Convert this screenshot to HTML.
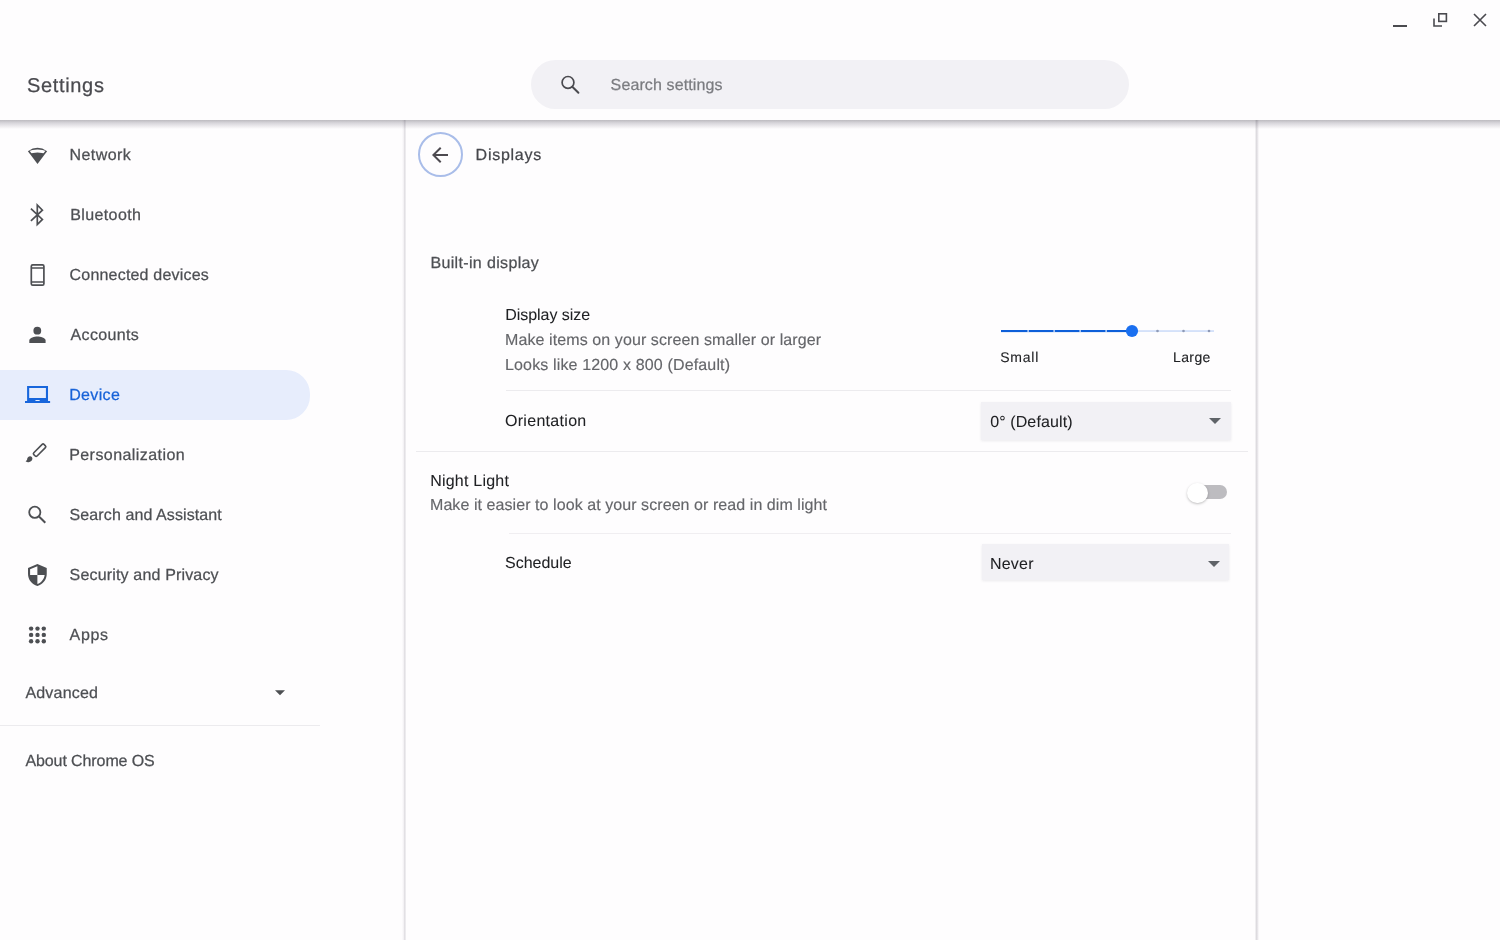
<!DOCTYPE html>
<html><head><meta charset="utf-8">
<style>
*{margin:0;padding:0;box-sizing:border-box}
html,body{width:1500px;height:940px;overflow:hidden;background:#fefdfe;font-family:"Liberation Sans",sans-serif;color:#5f6368}
#root{position:absolute;left:0;top:0;width:1500px;height:940px;will-change:transform;background:#fefdfe;text-rendering:geometricPrecision}
.abs{position:absolute;white-space:nowrap}
.t16{font-size:16px;line-height:16px;-webkit-text-stroke:0.25px currentColor}
#shadow{position:absolute;left:0;top:120px;width:1500px;height:9px;background:linear-gradient(#bebdc1,#dad9dd 35%,#ffffff);mix-blend-mode:multiply;z-index:5}
#search{position:absolute;left:531px;top:60px;width:598px;height:49px;border-radius:25px;background:#f2f1f5}
#panel{position:absolute;left:402px;top:120px;width:856px;height:820px}
#panel:before{content:"";position:absolute;left:0;top:0;width:4px;height:820px;background:linear-gradient(90deg,#fefdfe,#f3f1f4 40%,#e2e0e4 60%,#e2e0e4 80%,#fefdfe)}
#panel:after{content:"";position:absolute;left:853px;top:0;width:4px;height:820px;background:linear-gradient(90deg,#fefdfe,#dad8dc 30%,#e6e4e8 60%,#fefdfe)}
.nav{color:#4d4f53}
.pill{position:absolute;left:0;top:370px;width:310px;height:50px;background:#e7edfc;border-radius:0 24px 24px 0}
.div{position:absolute;height:1px;background:#ecebee}
.dd{position:absolute;background:#f2f1f5;width:250px;height:38px;box-shadow:0 1px 2.5px rgba(60,60,80,0.09)}
.tri{position:absolute;width:0;height:0;border-left:6px solid transparent;border-right:6px solid transparent;border-top:6px solid #5f6368}
.dark{color:#202124;-webkit-text-stroke-width:0.05px}
.sec{color:#65666a;-webkit-text-stroke-width:0.15px}
svg.abs{overflow:visible}
</style></head><body><div id="root">
<!-- window controls -->
<svg class="abs" style="left:0;top:0" width="1500" height="140">
  <rect x="1393" y="25" width="14" height="2" fill="#4a4a4f"/>
  <path d="M1434 18.5 V26 H1442" stroke="#4a4a4f" stroke-width="1.6" fill="none"/>
  <rect x="1438.8" y="13.8" width="7.6" height="7.6" stroke="#4a4a4f" stroke-width="1.6" fill="none"/>
  <path d="M1474 14 L1486 26 M1486 14 L1474 26" stroke="#4a4a4f" stroke-width="1.6" fill="none"/>
</svg>
<div id="t0" class="abs" style="left:27px;top:73.71px;font-size:20px;line-height:24px;color:#4a4a4f;-webkit-text-stroke:0.25px #4a4a4f;letter-spacing:0.659px">Settings</div>
<div id="search"></div>
<svg class="abs" style="left:0;top:0" width="600" height="110"><g fill="none" stroke="#4a4a4f"><circle cx="568" cy="82.4" r="5.9" stroke-width="1.7"/><path d="M572.3 86.7 L578.4 92.8" stroke-width="2" stroke-linecap="round"/></g></svg>
<div id="t1" class="abs t16" style="left:610.6px;top:78.3px;color:#7b7c80;letter-spacing:0.121px;font-size:16px">Search settings</div>
<div id="shadow"></div>

<!-- sidebar -->
<div class="pill"></div>
<svg class="abs" style="left:0;top:0" width="60" height="700">
  <g fill="#4d4f53" stroke="none">
    <!-- wifi -->
    <path d="M27.9 151.2 Q37.5 144.3 47.1 151.2 L37.5 164 Z"/>
    <!-- person -->
    <circle cx="37.3" cy="330.7" r="3.9"/>
    <path d="M29.3 343 V340.5 C29.3 337.9 34.6 336.6 37.4 336.6 S45.6 337.9 45.6 340.5 V343 Z"/>
    <!-- shield -->
    <path transform="translate(24.9 563) scale(1.04 1)" d="M12 1L3 5v6c0 5.55 3.84 10.74 9 12 5.16-1.26 9-6.45 9-12V5l-9-4zm0 10.99h7c-.53 4.12-3.28 7.79-7 8.94V12H5V6.3l7-3.11v8.8z"/>
    <!-- apps -->
    <circle cx="31.1" cy="628.6" r="2.2"/><circle cx="37.5" cy="628.6" r="2.2"/><circle cx="43.8" cy="628.6" r="2.2"/>
    <circle cx="31.1" cy="634.9" r="2.2"/><circle cx="37.5" cy="634.9" r="2.2"/><circle cx="43.8" cy="634.9" r="2.2"/>
    <circle cx="31.1" cy="641.2" r="2.2"/><circle cx="37.5" cy="641.2" r="2.2"/><circle cx="43.8" cy="641.2" r="2.2"/>
    <!-- brush blob -->
    <path d="M30.2 456.2 C28.4 456.2 27.2 457.6 27.2 459.1 C27.2 460.2 26.5 460.9 25.6 461.2 C26.6 462 27.7 462.2 28.6 462.2 C30.7 462.2 32.4 460.6 32.4 458.6 C32.4 457.2 31.5 456.2 30.2 456.2 Z"/>
  </g>
  <!-- wifi inner gap -->
  <clipPath id="wc"><path d="M27.5 148 H47.5 L41.5 156 H33.5 Z"/></clipPath><path clip-path="url(#wc)" d="M28 152.8 Q37.5 149.2 47 152.8" stroke="#fefdfe" stroke-width="2.8" fill="none"/>
  <g fill="none" stroke="#4d4f53" stroke-width="1.7">
    <!-- bluetooth -->
    <path d="M30.9 208.7 L42.4 219.4 L37.3 224.5 V205 L42.4 210.2 L30.9 220.9" stroke-linejoin="miter"/>
    <!-- phone -->
    <rect x="31.3" y="264.8" width="12.6" height="20.4" rx="1.4"/>
    <path d="M31.3 267.9 H43.9 M31.3 282.1 H43.9" stroke-width="1.5"/>
    <!-- search -->
    <circle cx="34.8" cy="512.3" r="5.6" stroke-width="1.8"/>
    <path d="M39 516.5 L45.3 522.8" stroke-width="2"/>
    <!-- brush handle -->
    <rect x="-7.2" y="-2.3" width="14.4" height="4.6" rx="1.3" transform="translate(39.6 450.2) rotate(-45)" stroke-width="1.6"/>
  </g>
  <!-- laptop -->
  <path transform="translate(25.0 383) scale(1.046 1)" fill="#1866dc" d="M22 18V3H2v15H0v2h24v-2h-2zm-8 0h-4v-1h4v1zm6-3H4V5h16v10z"/>
  <!-- advanced arrow -->
  <path d="M275 690.2 H285 L280 695.3 Z" fill="#4d4f53"/>
</svg>
<div id="t2" class="abs t16 nav" style="left:69.4px;top:148px;letter-spacing:0.453px;font-size:16px">Network</div>
<div id="t3" class="abs t16 nav" style="left:70.2px;top:208px;letter-spacing:0.391px;font-size:16px">Bluetooth</div>
<div id="t4" class="abs t16 nav" style="left:69.6px;top:268px;letter-spacing:0.191px;font-size:16px">Connected devices</div>
<div id="t5" class="abs t16 nav" style="left:70.6px;top:328px;letter-spacing:0.325px;font-size:16px">Accounts</div>
<div id="t6" class="abs t16" style="left:69.2px;top:388px;color:#1762d8;letter-spacing:0.34px;font-size:16px">Device</div>
<div id="t7" class="abs t16 nav" style="left:69.2px;top:448px;letter-spacing:0.43px;font-size:16px">Personalization</div>
<div id="t8" class="abs t16 nav" style="left:69.6px;top:508px;letter-spacing:0.1px;font-size:16px">Search and Assistant</div>
<div id="t9" class="abs t16 nav" style="left:69.6px;top:568px;letter-spacing:0.167px;font-size:16px">Security and Privacy</div>
<div id="t10" class="abs t16 nav" style="left:69.6px;top:628px;letter-spacing:0.665px;font-size:16px">Apps</div>
<div id="t11" class="abs t16 nav" style="left:25.4px;top:686.01px;letter-spacing:0.2px;font-size:16px">Advanced</div>
<div class="div" style="left:0;top:725px;width:320px"></div>
<div id="t12" class="abs t16 nav" style="left:25.4px;top:754.41px;font-size:16px;letter-spacing:-0.095px">About Chrome OS</div>

<!-- panel -->
<div id="panel"></div>
<div class="abs" style="left:418px;top:132px;width:45px;height:45px;border-radius:50%;border:2.2px solid #a9bde9"></div>
<svg class="abs" style="left:427.9px;top:143px" width="24" height="24" viewBox="0 0 24 24"><path fill="#4d4a50" d="M20 11H7.83l5.59-5.59L12 4l-8 8 8 8 1.41-1.41L7.83 13H20v-2z"/></svg>
<div id="t13" class="abs t16 nav" style="left:475.6px;top:148px;letter-spacing:0.743px;color:#45464b;font-size:16px">Displays</div>
<div id="t14" class="abs t16 nav" style="left:430.4px;top:255.8px;letter-spacing:0.35px;font-size:16px">Built-in display</div>
<div id="t15" class="abs t16 dark" style="left:505.2px;top:308.21px;font-size:16px;letter-spacing:-0.04px">Display size</div>
<div id="t16" class="abs t16 sec" style="left:505px;top:333px;letter-spacing:0.094px;font-size:16px">Make items on your screen smaller or larger</div>
<div id="t17" class="abs t16 sec" style="left:505px;top:358.21px;letter-spacing:0.149px;font-size:16px">Looks like 1200 x 800 (Default)</div>
<!-- slider -->
<svg class="abs" style="left:0;top:0" width="1500" height="600">
  <rect x="1001" y="330.2" width="213" height="1.7" fill="#d0def9"/>
  <rect x="1001" y="330" width="131" height="2.1" fill="#0e5fd9"/>
  <g fill="#e8effc"><rect x="1027.5" y="330" width="1.2" height="2"/><rect x="1053.5" y="330" width="1.2" height="2"/><rect x="1079.5" y="330" width="1.2" height="2"/><rect x="1105.5" y="330" width="1.2" height="2"/></g>
  <g fill="#8e99b6"><circle cx="1157.5" cy="331" r="1.3"/><circle cx="1183.5" cy="331" r="1.3"/><circle cx="1209" cy="331" r="1.3"/></g>
  <circle cx="1132" cy="331" r="6.1" fill="#1a6ff0"/>
</svg>
<div id="t18" class="abs dark" style="left:1000.2px;top:350px;font-size:14px;line-height:14px;letter-spacing:0.8px;-webkit-text-stroke:0.1px #202124">Small</div>
<div id="t19" class="abs dark" style="left:1173px;top:350px;font-size:14px;line-height:14px;letter-spacing:0.4px;-webkit-text-stroke:0.1px #202124">Large</div>
<div class="div" style="left:506px;top:390px;width:725px"></div>
<div id="t20" class="abs t16 dark" style="left:505px;top:414.41px;letter-spacing:0.3px;font-size:16px">Orientation</div>
<div class="dd" style="left:981px;top:402px"></div>
<div id="t21" class="abs t16 dark" style="left:990.2px;top:414.71px;letter-spacing:0.112px;font-size:16px">0° (Default)</div>
<div class="tri" style="left:1208.5px;top:418px"></div>
<div class="div" style="left:416px;top:451px;width:832px"></div>
<div id="t22" class="abs t16 dark" style="left:430.2px;top:473.5px;letter-spacing:0.22px;font-size:16px">Night Light</div>
<div id="t23" class="abs t16 sec" style="left:430px;top:498.3px;letter-spacing:0.069px;font-size:16px">Make it easier to look at your screen or read in dim light</div>
<!-- toggle -->
<div class="abs" style="left:1190px;top:485px;width:37px;height:14px;border-radius:7px;background:#bdbcc0"></div>
<div class="abs" style="left:1187.3px;top:482.5px;width:20.5px;height:20.5px;border-radius:50%;background:#fff;box-shadow:0 1px 2.5px rgba(0,0,0,0.25)"></div>
<div class="div" style="left:509px;top:533px;width:722px;background:#f0eef1"></div>
<div id="t24" class="abs t16 dark" style="left:505px;top:556.41px;font-size:16px;letter-spacing:0.001px">Schedule</div>
<div class="dd" style="left:982px;top:544px;width:247px;height:36px"></div>
<div id="t25" class="abs t16 dark" style="left:990px;top:556.8px;font-size:16px;letter-spacing:0.2px">Never</div>
<div class="tri" style="left:1208px;top:561px"></div>
</div></body></html>
